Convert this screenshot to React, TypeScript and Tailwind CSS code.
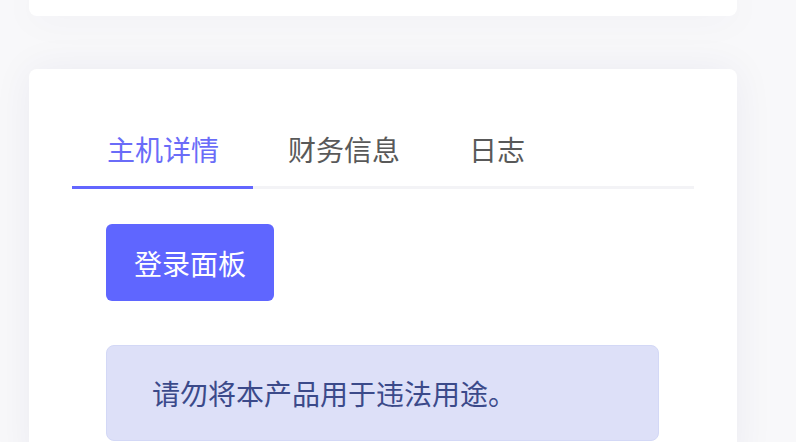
const tabs = ['主机详情', '财务信息', '日志'];

export default function App() {
  return (
    <div
      className="h-[442px] overflow-hidden bg-[#f8f8fa] pl-[29px] pr-[59px]"
      style={{ fontFamily: '"Noto Sans CJK SC", "Noto Sans", sans-serif' }}
    >
      {/* Previous card, only its bottom edge shows */}
      <div className="h-[16px] rounded-b-lg bg-white shadow-[0_0_40px_rgba(40,40,110,0.06)]" />

      {/* Details card */}
      <div className="mt-[53px] h-[400px] rounded-lg bg-white px-[43px] pt-[43px] shadow-[0_0_40px_rgba(40,40,110,0.06)]">
        {/* Tabs */}
        <div className="flex border-b-[3px] border-[#f3f3f6]">
          {tabs.map((tab, i) => (
            <div
              key={tab}
              className={
                i === 0
                  ? '-mb-[3px] border-b-[3px] border-[#6366ff] pl-[35px] pr-[34px] py-[16px] text-[28px] leading-[42px] text-[#6a6cf8]'
                  : '-mb-[3px] border-b-[3px] border-transparent pl-[35px] pr-[34px] py-[16px] text-[28px] leading-[42px] text-[#595959]'
              }
            >
              {tab}
            </div>
          ))}
        </div>

        {/* Tab content */}
        <div className="pl-[34px]">
          <button className="mt-[35px] flex h-[77px] w-[168px] items-center justify-center rounded-md bg-[#5f66ff] text-[28px] text-white">
            登录面板
          </button>

          <div className="mt-[44px] flex h-[96px] w-[553px] items-center rounded-lg border border-[#d3d8f6] bg-[#dde0f8] pl-[45px] text-[28px] text-[#3b4a8a]">
            请勿将本产品用于违法用途。
          </div>
        </div>
      </div>
    </div>
  );
}
